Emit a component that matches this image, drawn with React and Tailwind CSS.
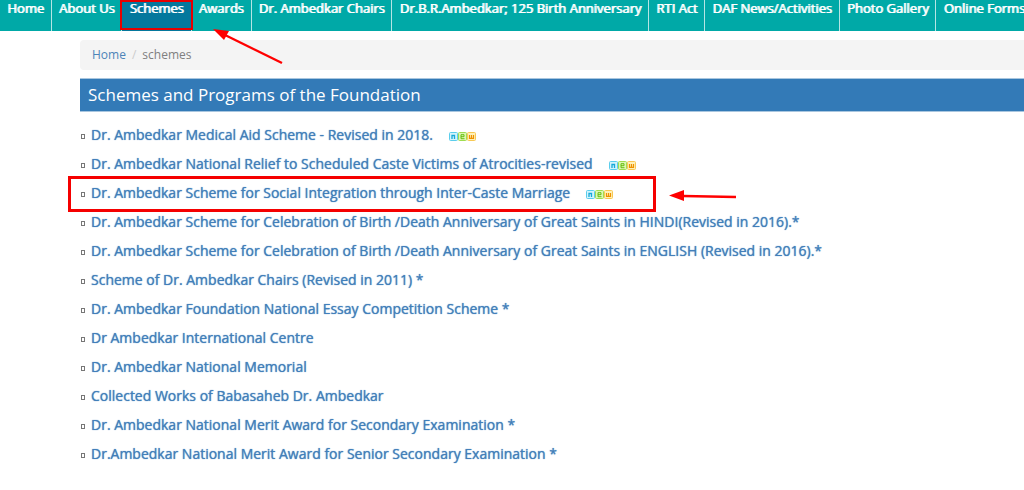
const navItems = [
  'Home',
  'About Us',
  'Schemes',
  'Awards',
  'Dr. Ambedkar Chairs',
  'Dr.B.R.Ambedkar; 125 Birth Anniversary',
  'RTI Act',
  'DAF News/Activities',
  'Photo Gallery',
  'Online Forms',
]

const schemes = [
  { title: 'Dr. Ambedkar Medical Aid Scheme - Revised in 2018.', isNew: true },
  { title: 'Dr. Ambedkar National Relief to Scheduled Caste Victims of Atrocities-revised', isNew: true },
  { title: 'Dr. Ambedkar Scheme for Social Integration through Inter-Caste Marriage', isNew: true, marked: true },
  { title: 'Dr. Ambedkar Scheme for Celebration of Birth /Death Anniversary of Great Saints in HINDI(Revised in 2016).*' },
  { title: 'Dr. Ambedkar Scheme for Celebration of Birth /Death Anniversary of Great Saints in ENGLISH (Revised in 2016).*' },
  { title: 'Scheme of Dr. Ambedkar Chairs (Revised in 2011) *' },
  { title: 'Dr. Ambedkar Foundation National Essay Competition Scheme *' },
  { title: 'Dr Ambedkar International Centre' },
  { title: 'Dr. Ambedkar National Memorial' },
  { title: 'Collected Works of Babasaheb Dr. Ambedkar' },
  { title: 'Dr. Ambedkar National Merit Award for Secondary Examination *' },
  { title: 'Dr.Ambedkar National Merit Award for Senior Secondary Examination *' },
]

export default function App() {
  return (
    <div className="overflow-x-hidden bg-white font-['Open_Sans',sans-serif]">
      <NavBar />
      <main className="pl-20 pt-[9px]">
        <Breadcrumb />
        <h1 className="mt-2 h-[34px] border-y border-[#a9c6df] bg-[#337ab7] pl-2 text-[17px] leading-8 text-white">
          Schemes and Programs of the Foundation
        </h1>
        <ul className="pt-2">
          {schemes.map((scheme) => (
            <SchemeRow key={scheme.title} {...scheme} />
          ))}
        </ul>
      </main>
    </div>
  )
}

function NavBar() {
  return (
    <nav className="relative h-[31px] bg-[#00a9a7]">
      <ul className="flex h-full">
        {navItems.map((item) => (
          <li key={item} className="relative shrink-0 border-r border-[#b5e5e4] last:border-r-0">
            <a
              href="#"
              className={`block h-full px-[7px] text-[13px] leading-4 whitespace-nowrap text-white [text-shadow:1px_0_0_#fff] ${
                item === 'Schemes' ? 'bg-[#04789d]' : ''
              }`}
            >
              {item}
            </a>
            {item === 'Schemes' && (
              <>
                <span className="absolute -left-0.5 -right-0.5 top-0 h-[30px] border-2 border-[#e60000]" />
                <NavArrow />
              </>
            )}
          </li>
        ))}
      </ul>
    </nav>
  )
}

function NavArrow() {
  return (
    <svg className="absolute left-[91px] top-7 z-10" width="72" height="38" viewBox="0 0 72 38" aria-hidden="true">
      <path d="M10 6 69 35" stroke="#f00" strokeWidth="2.4" fill="none" />
      <path d="M0 1 16 3 11 12Z" fill="#f00" />
    </svg>
  )
}

function Breadcrumb() {
  return (
    <nav aria-label="Breadcrumb" className="rounded-l-sm bg-[#f4f4f4] pl-3">
      <ol className="flex h-[30px] items-center text-[12px] leading-4 text-[#808080]">
        <li>
          <a href="#" className="text-[#4d84b8]">Home</a>
        </li>
        <li className="px-1.5 text-[#cccccc]" aria-hidden="true">/</li>
        <li>schemes</li>
      </ol>
    </nav>
  )
}

function SchemeRow({ title, isNew, marked }) {
  return (
    <li className="relative flex h-[29px] items-center whitespace-nowrap">
      <span className="ml-px mt-1 mr-1.5 h-[5px] w-1 border border-[#777777]" />
      <a href="#" className="text-[14px] leading-5 text-[#427fba] [text-shadow:0_0_1px_#427fba]">{title}</a>
      {isNew && <NewBadge />}
      {marked && (
        <>
          <span className="absolute -left-3 -top-0.5 h-9 w-[588px] border-[3px] border-[#f50000]" />
          <svg className="absolute left-[589px] top-3" width="68" height="14" viewBox="0 0 68 14" aria-hidden="true">
            <path d="M14 6 67 7" stroke="#f00" strokeWidth="2.6" fill="none" />
            <path d="M0 5.500 15 0V11Z" fill="#f00" />
          </svg>
        </>
      )}
    </li>
  )
}

function NewBadge() {
  return (
    <svg className="ml-4 mt-1" width="27" height="9" viewBox="0 0 27 9" role="img" aria-label="new">
      <rect x=".5" y=".5" width="8" height="8" rx="1" fill="#d3f4fc" stroke="#5bcdec" />
      <rect x="9.500" y=".5" width="8" height="8" rx="1" fill="#dcf7b4" stroke="#a0dd50" />
      <rect x="18.500" y=".5" width="8" height="8" rx="1" fill="#fff0b8" stroke="#f7c954" />
      <path d="M3 7V3.500H5.500V7" stroke="#18a9d8" fill="none" strokeWidth="1.300" />
      <path d="M12 4.700H15V2.700H12V6.700H15.500" stroke="#5cb800" fill="none" strokeWidth=".9" />
      <path d="M20.500 3V6.300H24.500V3M22.500 3V6" stroke="#ee9200" fill="none" strokeWidth="1.200" />
    </svg>
  )
}
